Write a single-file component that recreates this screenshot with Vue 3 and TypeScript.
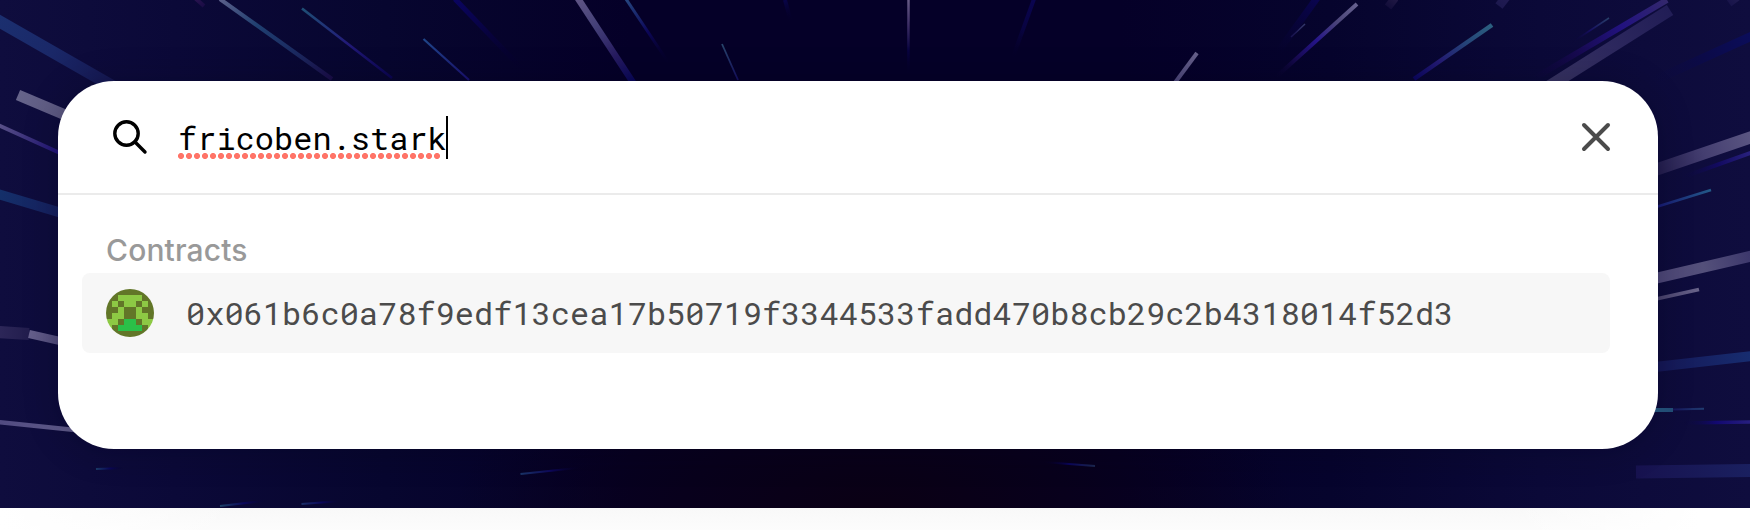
<script setup lang="ts">
interface Streak {
  from: [number, number]
  to: [number, number]
  width: number
  colors: string[]
}

function streak(x1: number, y1: number, x2: number, y2: number, width: number, ...colors: string[]): Streak {
  return { from: [x1, y1], to: [x2, y2], width, colors }
}

const streaks: Streak[] = [
  streak(-10, 16, 114, 87, 12, '#1b3070', '#1a2868', '#151650'),
  streak(195, -2, 204, 6, 4, '#2a1450', '#1a0c45'),
  streak(220, -1, 332, 79, 4, '#5b5f8a', '#1f3f70', '#1b2a60', '#1a0d48'),
  streak(302, 8.5, 392, 78, 2.6, '#1e4f75', '#221a78', '#0a0450'),
  streak(423.5, 39, 469, 80, 2.2, '#1f4688', '#1a1070'),
  streak(455, -1, 528, 75, 5, '#0a0460', '#07023a', '#05002800'),
  streak(577, -3, 634, 84, 6.5, '#5f5585', '#444078', '#271c60', '#060458'),
  streak(626, -1, 670, 65, 3, '#25467f', '#0c0658', '#05002800'),
  streak(722, 44, 738, 80, 1.8, '#28466a', '#150f60'),
  streak(785, 0, 791, 22, 4, '#080448', '#05002800'),
  streak(908.5, 0, 908.4, 76, 2.5, '#665a85', '#3b2c64', '#080340', '#05002800'),
  streak(1034, -1, 1012, 60, 4, '#0a0450', '#080340', '#05002800'),
  streak(1197, 53, 1174, 84, 4, '#66608a', '#4a4478'),
  streak(1305, 24, 1291, 37, 1.5, '#34386c', '#201b55'),
  streak(1317, -2, 1278, 52, 7, '#090450', '#08033a00'),
  streak(1357, 4, 1276, 77, 4, '#66618f', '#4a4478', '#25148a', '#170a50', '#0a043000'),
  streak(1395, -2, 1388, 7, 8, '#201844', '#120d3a'),
  streak(1506, -3, 1499, 6, 9, '#201b52', '#1c184e'),
  streak(1737, -3, 1729, 3, 8, '#1f1b50', '#18144a'),
  streak(1492, 25, 1414, 79, 4.5, '#2b6080', '#254478', '#241b74', '#0c0660'),
  streak(1609, 18, 1571, 43, 1.5, '#284069', '#160e60', '#0a043000'),
  streak(1667, 0, 1533, 79, 6, '#33286c', '#221280', '#170a50', '#0f053f00'),
  streak(1670, 10, 1548, 87, 12, '#211d56', '#2d285e', '#383462'),
  streak(1752, 36, 1655, 80, 9, '#0b0d5a', '#0b0a48', '#0b094000'),
  streak(18, 95, 76, 119.5, 11, '#66648a', '#59557f'),
  streak(-2, 125, 60, 153, 4, '#5a5288', '#3a307a', '#1e1078'),
  streak(-2, 194, 60, 212.5, 10, '#14306a', '#161f5e'),
  streak(-2, 332, 29, 334, 12, '#2d2759', '#221d4d'),
  streak(29, 334, 60, 341, 8, '#66608c', '#514b7c'),
  streak(-2, 422, 75, 430, 4.5, '#504a80', '#625d8c'),
  streak(96, 469, 124, 468, 2, '#1a3c68', '#0a065a', '#06032f00'),
  streak(220, 506, 268, 500.5, 2, '#1d4268', '#0a065a', '#06032f00'),
  streak(301.5, 504, 342, 501, 2, '#1b2f68', '#0a065a', '#06032f00'),
  streak(520.5, 474, 582, 467.5, 2, '#1a3468', '#0d075a', '#06002000'),
  streak(1095, 466, 1043, 462, 2, '#1c2850', '#0a055a', '#06002000'),
  streak(1752, 137, 1655, 170, 12, '#5b5682', '#443e70', '#211b4c'),
  streak(1752, 152.5, 1683, 177, 4, '#2a2280', '#120a60', '#0d094000'),
  streak(1711, 190, 1656, 207, 2.6, '#235a88', '#181874'),
  streak(1752, 256, 1655, 278.5, 11, '#3c376c', '#54507a', '#4d4678'),
  streak(1699, 289.5, 1656, 299, 3.8, '#69648a', '#47406c'),
  streak(1752, 356, 1655, 367, 10, '#172d70', '#151655'),
  streak(1654, 410, 1673, 410, 4, '#285b84', '#224e78'),
  streak(1704, 408.7, 1673, 409.5, 2, '#203c70', '#16165c'),
  streak(1752, 422, 1680, 423, 3.4, '#282080', '#120870', '#0a083400'),
  streak(1636, 472, 1752, 470.5, 13, '#17124f', '#1a2060'),
]

// D = background, L = foreground, G = accent
const avatarRows: string[] = [
  'DDDDDDDD',
  'DDLLLLDD',
  'DLDLLDLD',
  'DDLDDLDD',
  'DLLDDLLD',
  'LLDGGDLL',
  'LDGGGGDL',
  'DDDDDDDD',
]
const avatarColors: Record<string, string> = { D: '#627628', L: '#8dc944', G: '#2bc048' }

const query = 'fricoben.stark'
const contracts: string[] = ['0x061b6c0a78f9edf13cea17b50719f3344533fadd470b8cb29c2b4318014f52d3']
</script>

<template>
  <div class="page">
    <section class="hero">
      <svg class="streaks" viewBox="0 0 1750 508" aria-hidden="true">
        <defs>
          <linearGradient
            v-for="(s, i) in streaks"
            :id="`streak-${i}`"
            :key="i"
            gradientUnits="userSpaceOnUse"
            :x1="s.from[0]"
            :y1="s.from[1]"
            :x2="s.to[0]"
            :y2="s.to[1]"
          >
            <stop v-for="(c, j) in s.colors" :key="j" :offset="j / (s.colors.length - 1)" :stop-color="c" />
          </linearGradient>
        </defs>
        <path
          v-for="(s, i) in streaks"
          :key="i"
          :d="`M${s.from[0]} ${s.from[1]}L${s.to[0]} ${s.to[1]}`"
          :stroke="`url(#streak-${i})`"
          :stroke-width="s.width"
        />
      </svg>

      <div class="dialog">
        <header class="search">
          <svg class="search-icon" viewBox="0 0 36 36" aria-hidden="true">
            <circle cx="14.5" cy="14.5" r="11.7" />
            <path d="M22.8 22.8L33 33" />
          </svg>
          <div class="field">
            <span class="query">{{ query }}</span>
            <span class="caret"></span>
          </div>
          <button class="close" aria-label="Close">
            <svg viewBox="0 0 32 32"><path d="M4 4L28 28M28 4L4 28" /></svg>
          </button>
        </header>

        <div class="results">
          <h2 class="group">Contracts</h2>
          <div v-for="address in contracts" :key="address" class="result">
            <svg class="avatar" viewBox="0 0 8 8" shape-rendering="crispEdges" aria-hidden="true">
              <template v-for="(row, y) in avatarRows" :key="y">
                <rect
                  v-for="(cell, x) in row.split('')"
                  :key="x"
                  :x="x"
                  :y="y"
                  width="1"
                  height="1"
                  :fill="avatarColors[cell]"
                />
              </template>
            </svg>
            <span class="address">{{ address }}</span>
          </div>
        </div>
      </div>
    </section>
    <footer class="below"></footer>
  </div>
</template>

<style>
body {
  margin: 0;
  background: #fff;
}
</style>

<style scoped>
.page {
  width: 1750px;
  height: 530px;
  overflow: hidden;
  display: flex;
  flex-direction: column;
}

.hero {
  position: relative;
  box-sizing: border-box;
  height: 508px;
  padding: 81px 92px 59px 58px;
  background:
    radial-gradient(ellipse 420px 170px at 50% 100%, #0a0014 0%, #0a001490 50%, #0a001400 100%),
    linear-gradient(90deg, #0f0d3e 0%, #0b0938 10%, #07062f 22%, #050028 36%, #050028 64%, #06042d 76%, #0b0938 88%, #0f0d3e 100%);
}

.streaks {
  position: absolute;
  inset: 0;
  width: 1750px;
  height: 508px;
  fill: none;
}

.dialog {
  position: relative;
  width: 1600px;
  height: 368px;
  border-radius: 56px;
  background: #fff;
  box-shadow: 0 2px 34px rgba(0, 0, 20, 0.25);
}

.search {
  display: flex;
  align-items: center;
  box-sizing: border-box;
  height: 114px;
  padding: 0 46px 0 54px;
  border-bottom: 2px solid #ebebeb;
}

.search-icon {
  width: 36px;
  height: 36px;
  margin-bottom: 1px;
  fill: none;
  stroke: #000;
  stroke-width: 3.4;
  stroke-linecap: round;
}

.field {
  display: flex;
  align-items: center;
  flex: 1;
  margin-left: 30px;
}

.query {
  width: 264px;
  height: 44px;
  font: 32px/46px "Roboto Mono", "DejaVu Sans Mono", monospace;
  color: #000;
  white-space: nowrap;
  background: radial-gradient(circle at 3px 3px, #ff7468 2.7px, #ff746800 3.3px) 0 38px / 8px 8px repeat-x;
}

.caret {
  width: 2px;
  height: 43px;
  margin-left: 4px;
  background: #000;
}

.close {
  width: 32px;
  height: 32px;
  padding: 0;
  border: 0;
  background: none;
}

.close svg {
  display: block;
  width: 32px;
  height: 32px;
  fill: none;
  stroke: #4b4b4b;
  stroke-width: 4;
  stroke-linecap: round;
}

.results {
  padding: 36px 48px 0 24px;
}

.group {
  margin: 0;
  padding-left: 24px;
  height: 42px;
  font: 500 30px/38px Inter, sans-serif;
  letter-spacing: 0.15px;
  color: #999;
}

.result {
  display: flex;
  align-items: center;
  height: 80px;
  padding-left: 24px;
  border-radius: 8px;
  background: #f7f7f7;
}

.avatar {
  width: 48px;
  height: 48px;
  border-radius: 50%;
}

.address {
  margin-left: 32px;
  font: 32px/48px "Roboto Mono", "DejaVu Sans Mono", monospace;
  color: #4b4b4b;
}

.below {
  height: 22px;
  background:
    linear-gradient(90deg, #fff 0, #fff0 240px, #fff0 1510px, #fff 1700px),
    linear-gradient(#f8f8f8, #fcfcfc);
}
</style>
